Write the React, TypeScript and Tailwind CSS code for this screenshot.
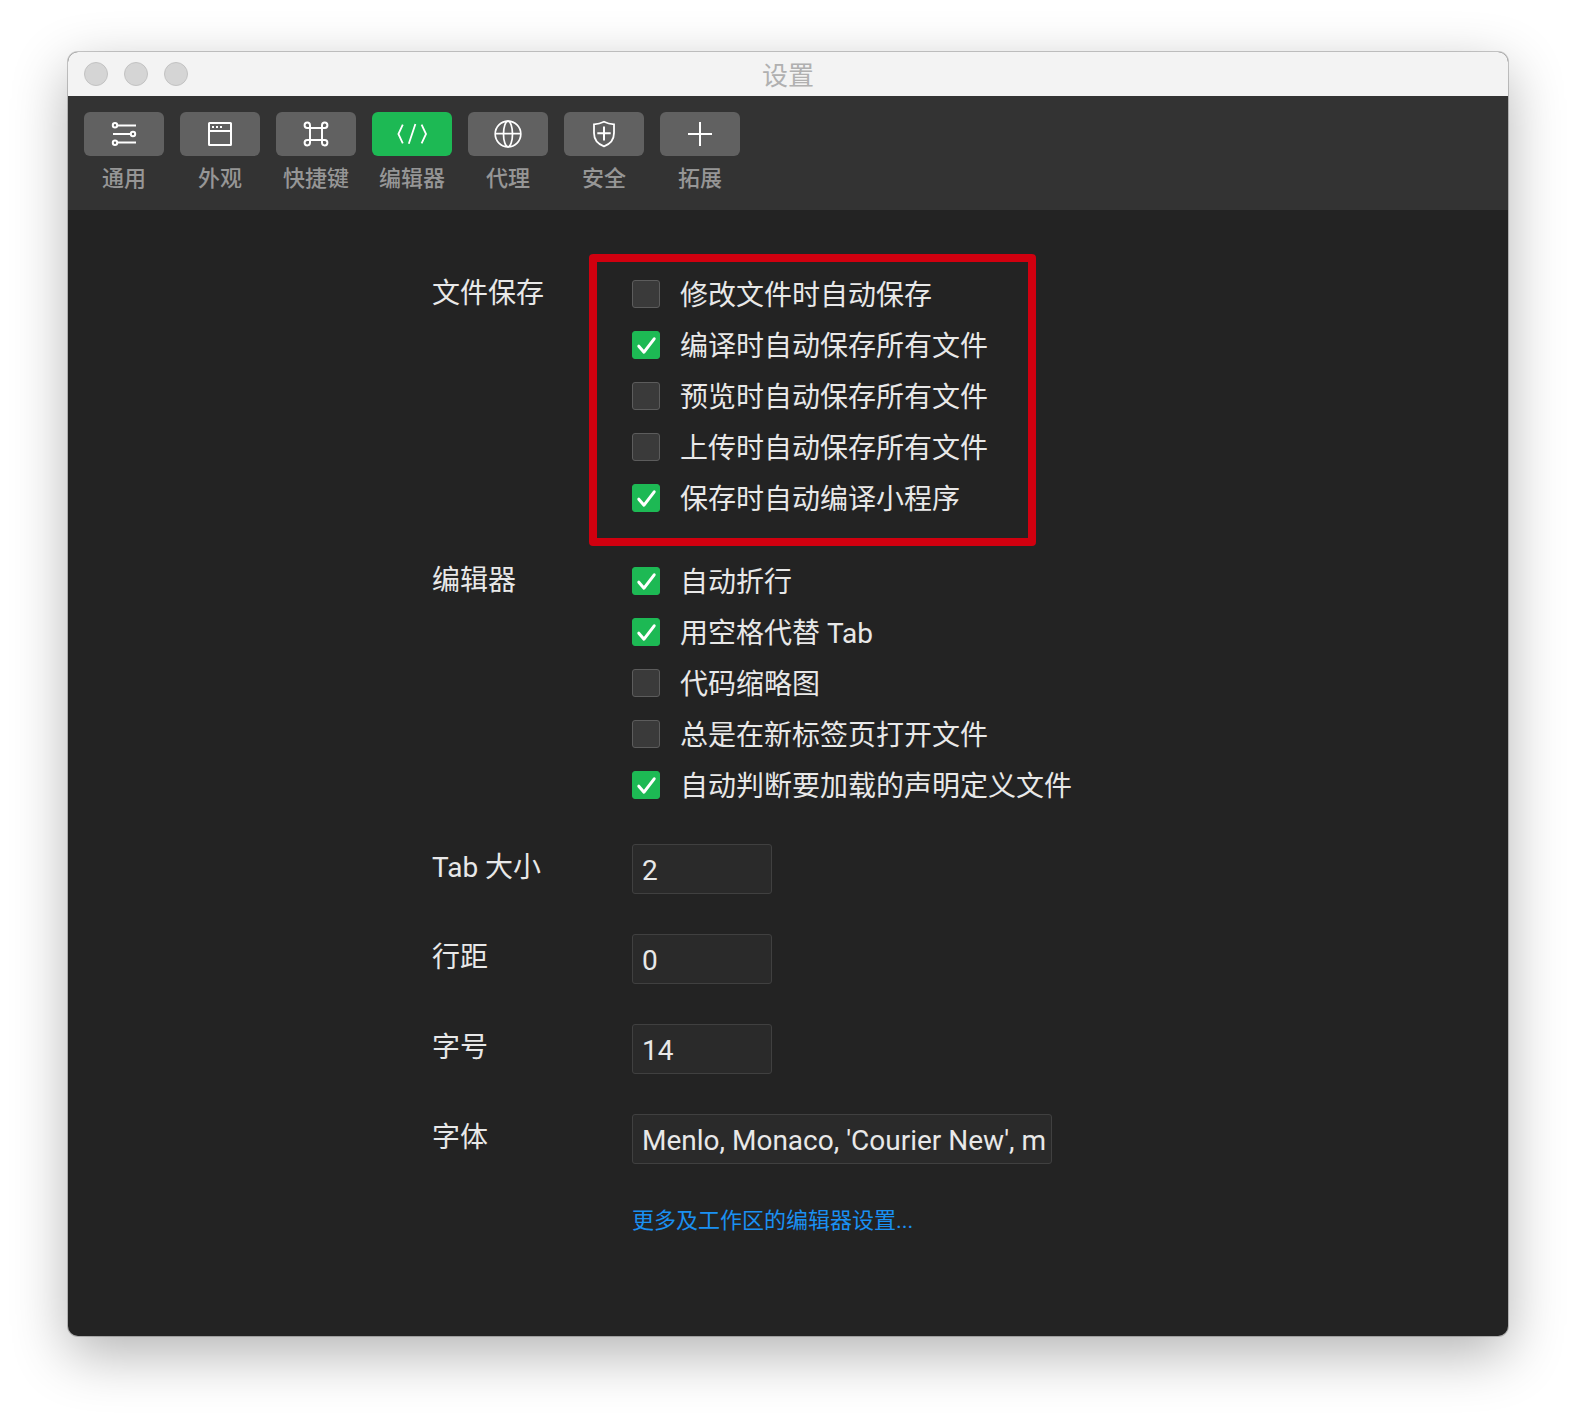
import { useState, type ReactNode } from 'react';

type Tab = { name: string; icon: ReactNode };

const tabs: Tab[] = [
  {
    name: '通用',
    icon: (
      <svg className="h-7 w-7" viewBox="0 0 28 28" fill="none" stroke="white" strokeWidth="2" aria-hidden="true">
        <circle cx="5" cy="5.3" r="2.2" />
        <path d="M7.3 5.5H26M3 14h17.6M7.3 22.5H26" />
        <circle cx="23" cy="14" r="2.2" />
        <circle cx="5" cy="22.7" r="2.2" />
      </svg>
    ),
  },
  {
    name: '外观',
    icon: (
      <svg className="h-7 w-7" viewBox="0 0 28 28" fill="none" stroke="white" strokeWidth="2" aria-hidden="true">
        <rect x="3" y="3" width="22" height="22" rx="0.5" />
        <path d="M3 11h22" />
        <path d="M6 7h2M10 7h2M14 7h2" />
      </svg>
    ),
  },
  {
    name: '快捷键',
    icon: (
      <svg className="h-7 w-7" viewBox="0 0 28 28" fill="none" stroke="white" strokeWidth="2" aria-hidden="true">
        <path d="M8 5.2a2.7 2.7 0 1 0-2.8 2.8H22.8A2.7 2.7 0 1 0 20 5.2V22.8A2.7 2.7 0 1 0 22.8 20H5.2A2.7 2.7 0 1 0 8 22.8Z" />
      </svg>
    ),
  },
  {
    name: '编辑器',
    icon: (
      <svg className="h-7 w-8" viewBox="0 0 32 28" fill="none" stroke="white" strokeWidth="1.8" aria-hidden="true">
        <path d="M6.8 4.6 2.4 14l4.4 9.4M25.6 4.6 30 14l-4.4 9.4M19.4 4 12.8 23.8" />
      </svg>
    ),
  },
  {
    name: '代理',
    icon: (
      <svg className="h-7 w-7" viewBox="0 0 28 28" fill="none" stroke="white" strokeWidth="1.7" aria-hidden="true">
        <circle cx="14" cy="14" r="12.8" />
        <ellipse cx="14" cy="14" rx="4.5" ry="12.8" />
        <path d="M1.2 13.7h25.6" />
      </svg>
    ),
  },
  {
    name: '安全',
    icon: (
      <svg className="h-7 w-7" viewBox="0 0 28 28" fill="none" stroke="white" strokeWidth="1.8" aria-hidden="true">
        <path d="M14 1.8C11 3.3 7.6 4.1 4 4.3V13c0 6.6 4 11.1 10 13.3 6-2.2 10-6.7 10-13.3V4.3C20.4 4.1 17 3.3 14 1.8Z" />
        <path d="M7.3 13.3h13.4M14 6.5v14" strokeWidth="2" />
      </svg>
    ),
  },
  {
    name: '拓展',
    icon: (
      <svg className="h-7 w-7" viewBox="0 0 28 28" fill="none" stroke="white" strokeWidth="2" aria-hidden="true">
        <path d="M2 14h24M14 2v24" />
      </svg>
    ),
  },
];

type Option = { text: string; on: boolean };

const saveOptions: Option[] = [
  { text: '修改文件时自动保存', on: false },
  { text: '编译时自动保存所有文件', on: true },
  { text: '预览时自动保存所有文件', on: false },
  { text: '上传时自动保存所有文件', on: false },
  { text: '保存时自动编译小程序', on: true },
];

const editorOptions: Option[] = [
  { text: '自动折行', on: true },
  { text: '用空格代替 Tab', on: true },
  { text: '代码缩略图', on: false },
  { text: '总是在新标签页打开文件', on: false },
  { text: '自动判断要加载的声明定义文件', on: true },
];

function CheckRow({ option }: { option: Option }) {
  return (
    <label className="flex h-[51px] items-center gap-5">
      <span className="relative mb-0.5 size-7 shrink-0">
        <input
          type="checkbox"
          defaultChecked={option.on}
          className="peer block size-7 appearance-none rounded-[3px] border border-[#5c5c5c] bg-[#3a3a3a] checked:border-[#1db954] checked:bg-[#1db954]"
        />
        <svg
          className="pointer-events-none absolute inset-0 hidden size-7 peer-checked:block"
          viewBox="0 0 28 28"
          fill="none"
          stroke="white"
          strokeWidth="3"
          strokeLinecap="round"
          strokeLinejoin="round"
          aria-hidden="true"
        >
          <path d="M6.8 15.2 12 21.2 22.2 7.8" />
        </svg>
      </span>
      <span className="pt-0.5 whitespace-nowrap">{option.text}</span>
    </label>
  );
}

function CheckGroup({ title, options, outlined }: { title: string; options: Option[]; outlined?: boolean }) {
  return (
    <div role="group" aria-label={title} className="grid grid-cols-[200px_1fr]">
      <div className="leading-[49px]">{title}</div>
      <div className="relative w-fit">
        {options.map((option) => (
          <CheckRow key={option.text} option={option} />
        ))}
        {outlined && (
          <div className="pointer-events-none absolute -top-[15px] -right-12 -bottom-[22px] -left-[43px] rounded-[4px] border-8 border-[#d0000f]" />
        )}
      </div>
    </div>
  );
}

function TextRow({ id, label, value, wide }: { id: string; label: string; value: string; wide?: boolean }) {
  return (
    <div className="grid grid-cols-[200px_1fr]">
      <label htmlFor={id} className="leading-[48px]">
        {label}
      </label>
      <input
        id={id}
        type="text"
        defaultValue={value}
        className={`h-[50px] rounded-[3px] border border-[#404040] bg-[#2a2a2a] pt-0.5 pr-1.5 pl-[9px] outline-none ${wide ? 'w-[420px]' : 'w-[140px]'}`}
      />
    </div>
  );
}

export default function App() {
  const [active, setActive] = useState('编辑器');
  return (
    <div className="bg-white px-[68px] pt-[52px] pb-[84px] font-['Roboto','Noto_Sans_CJK_SC',sans-serif]">
      <div className="overflow-hidden rounded-[10px] bg-[#232323] shadow-[0_0_0_1px_rgba(0,0,0,0.2),0_18px_56px_rgba(0,0,0,0.3)]">
        <header className="grid h-11 grid-cols-[1fr_auto_1fr] items-center bg-[#f3f3f3] px-4">
          <div className="flex gap-4">
            <button type="button" aria-label="关闭" className="size-6 rounded-full border border-[#c2c2c2] bg-[#d5d5d5]" />
            <button type="button" aria-label="最小化" className="size-6 rounded-full border border-[#c2c2c2] bg-[#d5d5d5]" />
            <button type="button" aria-label="缩放" className="size-6 rounded-full border border-[#c2c2c2] bg-[#d5d5d5]" />
          </div>
          <h1 className="pt-1 text-[26px] leading-10 text-[#b0b0b0]">设置</h1>
        </header>

        <nav className="flex h-[114px] gap-4 bg-[#333333] px-4 pt-4">
          {tabs.map((tab) => (
            <button
              key={tab.name}
              type="button"
              aria-pressed={active === tab.name}
              onClick={() => setActive(tab.name)}
              className="flex w-20 flex-col items-center gap-1"
            >
              <span
                className={`flex h-11 w-20 items-center justify-center rounded-md ${active === tab.name ? 'bg-[#1db954]' : 'bg-[#616161]'}`}
              >
                {tab.icon}
              </span>
              <span className="text-[22px] leading-[38px] font-medium whitespace-nowrap text-[#969696]">{tab.name}</span>
            </button>
          ))}
        </nav>

        <main className="mx-auto max-w-[712px] pt-[59px] pb-[98px] text-[28px] text-[#e8e8e8]">
          <CheckGroup title="文件保存" options={saveOptions} outlined />
          <div className="mt-8">
            <CheckGroup title="编辑器" options={editorOptions} />
          </div>
          <div className="mt-[33px] flex flex-col gap-10">
            <TextRow id="tab-size" label="Tab 大小" value="2" />
            <TextRow id="line-gap" label="行距" value="0" />
            <TextRow id="font-size" label="字号" value="14" />
            <TextRow id="font-family" label="字体" value="Menlo, Monaco, 'Courier New', monospace" wide />
          </div>
          <div className="mt-10 ml-[200px] flex">
            <a href="#more" className="text-[22px] leading-[34px] text-[#1a90f2]">
              更多及工作区的编辑器设置...
            </a>
          </div>
        </main>
      </div>
    </div>
  );
}
